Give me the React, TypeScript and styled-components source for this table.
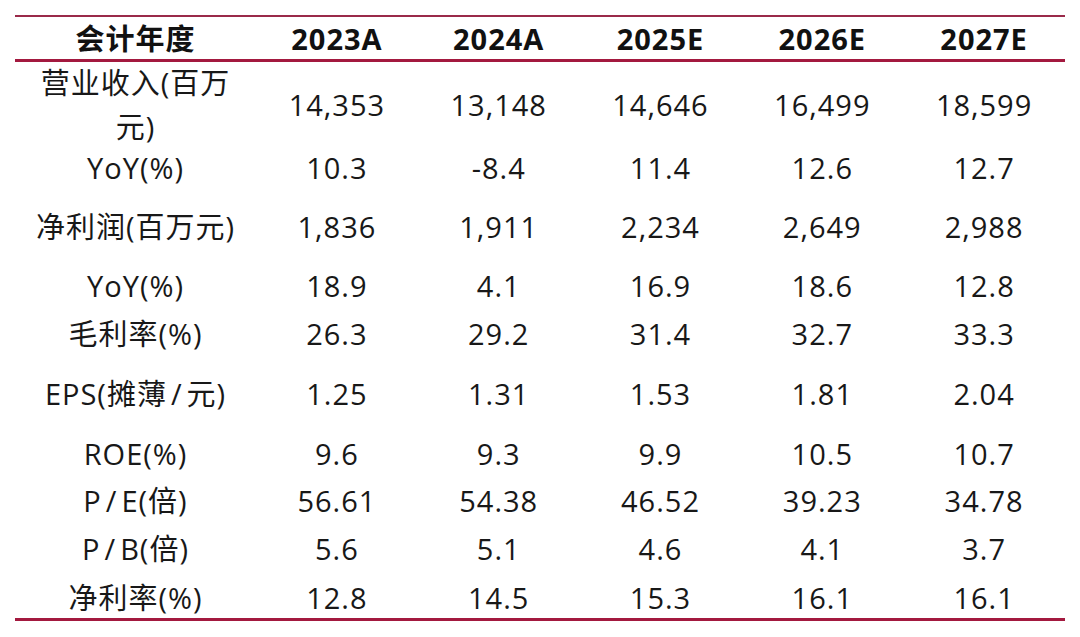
import React from "react";
import styled, { createGlobalStyle } from "styled-components";

const Global = createGlobalStyle`
  html, body { margin: 0; padding: 0; background: #ffffff; }
  body { font-family: "Open Sans", "Noto Sans CJK SC", sans-serif; color: #141414; }
`;

const Page = styled.div`
  width: 1080px;
  height: 637px;
  padding: 15px 0 0 15px;
  box-sizing: border-box;
`;

const Table = styled.div`
  width: 1050px;
  display: grid;
  grid-template-columns: 241px repeat(5, 1fr);
  border-top: 2px solid #9a2a4a;
  border-bottom: 3px solid #a3193f;
`;

const HeadCell = styled.div`
  height: 42px;
  border-bottom: 3px solid #a3193f;
  display: flex;
  align-items: center;
  justify-content: center;
  font-size: 29px;
  font-weight: 700;
  line-height: 1;
  letter-spacing: 1px;
  color: #111;
`;

const Cell = styled.div<{ $h: number }>`
  height: ${(p) => p.$h}px;
  display: flex;
  align-items: center;
  justify-content: center;
  text-align: center;
  font-size: 29px;
  line-height: 44px;
  letter-spacing: 1px;
  color: #181818;
  box-sizing: border-box;
`;

const Slash = styled.span`
  margin: 0 4px;
`;

type Row = { label: React.ReactNode; h: number; values: string[] };

const headers = ["会计年度", "2023A", "2024A", "2025E", "2026E", "2027E"];

const rows: Row[] = [
  { label: <>营业收入(百万<br />元)</>, h: 86, values: ["14,353", "13,148", "14,646", "16,499", "18,599"] },
  { label: "YoY(%)", h: 40, values: ["10.3", "-8.4", "11.4", "12.6", "12.7"] },
  { label: "净利润(百万元)", h: 78, values: ["1,836", "1,911", "2,234", "2,649", "2,988"] },
  { label: "YoY(%)", h: 40, values: ["18.9", "4.1", "16.9", "18.6", "12.8"] },
  { label: "毛利率(%)", h: 56, values: ["26.3", "29.2", "31.4", "32.7", "33.3"] },
  { label: <>EPS(摊薄<Slash>/</Slash>元)</>, h: 64, values: ["1.25", "1.31", "1.53", "1.81", "2.04"] },
  { label: "ROE(%)", h: 56, values: ["9.6", "9.3", "9.9", "10.5", "10.7"] },
  { label: <>P<Slash>/</Slash>E(倍)</>, h: 38, values: ["56.61", "54.38", "46.52", "39.23", "34.78"] },
  { label: <>P<Slash>/</Slash>B(倍)</>, h: 58, values: ["5.6", "5.1", "4.6", "4.1", "3.7"] },
  { label: "净利率(%)", h: 40, values: ["12.8", "14.5", "15.3", "16.1", "16.1"] },
];

export default function App() {
  return (
    <>
      <Global />
      <Page>
        <Table>
          {headers.map((h) => (
            <HeadCell key={h}>{h}</HeadCell>
          ))}
          {rows.map((r, i) => (
            <React.Fragment key={i}>
              <Cell $h={r.h}>{r.label}</Cell>
              {r.values.map((v, j) => (
                <Cell key={j} $h={r.h}>
                  {v}
                </Cell>
              ))}
            </React.Fragment>
          ))}
        </Table>
      </Page>
    </>
  );
}
